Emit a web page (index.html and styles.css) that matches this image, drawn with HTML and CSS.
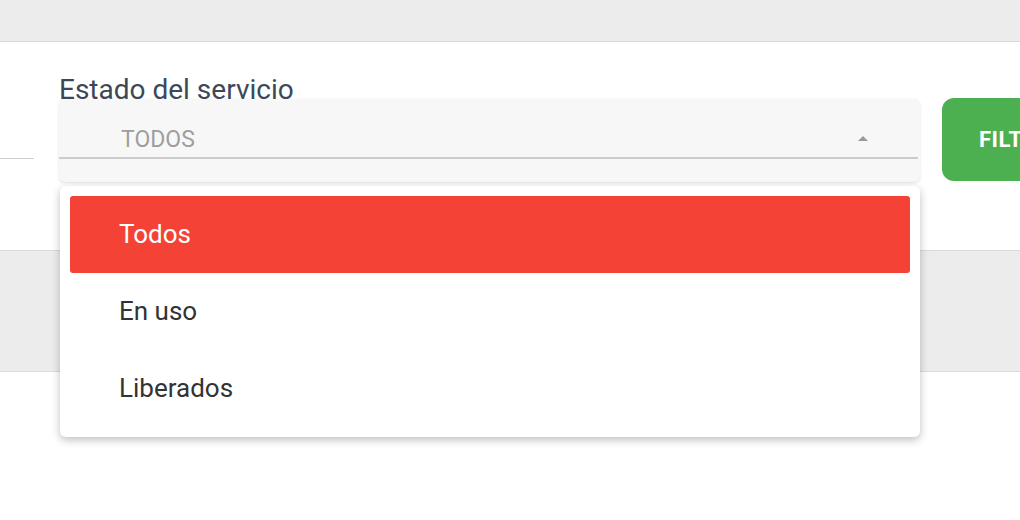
FILE: index.html
```html
<!DOCTYPE html>
<html lang="es">
<head>
  <meta charset="UTF-8" />
  <meta name="viewport" content="width=device-width, initial-scale=1.0"/>
  <title>Filtro de servicios</title>
  <link rel="stylesheet" href="styles.css">
</head>
<body>
  <div class="topbar"></div>

  <div class="filters">
    <div class="field-prev"></div>

    <div class="field">
      <label class="field-label">Estado del servicio</label>
      <div class="select">
        <div class="select-value">
          <span>TODOS</span>
          <span class="caret"></span>
        </div>
      </div>

      <ul class="menu">
        <li class="menu-item active">Todos</li>
        <li class="menu-item">En uso</li>
        <li class="menu-item">Liberados</li>
      </ul>
    </div>

    <button class="btn-filter">FILTRAR</button>
  </div>

  <div class="band"></div>
</body>
</html>
```

FILE: styles.css
```css
* {
  box-sizing: border-box;
  margin: 0;
  padding: 0;
}

body {
  font-family: Roboto, 'Liberation Sans', sans-serif;
  background: #fff;
  width: 1020px;
  height: 520px;
  overflow: hidden;
}

.topbar {
  height: 42px;
  background: #ececec;
  border-bottom: 1px solid #dadada;
}

.filters {
  display: flex;
  align-items: flex-start;
  height: 208px;
  padding-top: 34px;
}

.field-prev {
  width: 34px;
  height: 83px;
  border-bottom: 1px solid #cfcfcf;
  flex-shrink: 0;
}

.field {
  position: relative;
  margin-left: 25px;
  width: 861px;
  flex-shrink: 0;
}

.field-label {
  display: block;
  font-size: 28px;
  line-height: 27px;
  margin-bottom: -4px;
  color: #3c4858;
}

.select {
  position: relative;
  height: 83px;
  background: #f7f7f7;
  border-radius: 6px;
  box-shadow: 0 1px 3px rgba(0, 0, 0, 0.12);
}

.select-value {
  display: flex;
  align-items: center;
  justify-content: space-between;
  height: 60px;
  margin-right: 2px;
  padding: 22px 50px 0 62px;
  border-bottom: 2px solid #cccccc;
  font-size: 23px;
  color: #9e9e9e;
}

.caret {
  width: 0;
  height: 0;
  border-left: 5px solid transparent;
  border-right: 5px solid transparent;
  border-bottom: 5px solid #999;
  margin-top: -2px;
}

.menu {
  position: absolute;
  top: 110px;
  left: 1px;
  width: 860px;
  padding: 10px;
  list-style: none;
  background: #fff;
  border-radius: 6px;
  box-shadow: 0 3px 8px rgba(0, 0, 0, 0.25);
  z-index: 2;
}

.menu-item {
  height: 77px;
  line-height: 76px;
  padding-left: 49px;
  font-size: 26px;
  color: #333;
  border-radius: 3px;
}

.menu-item.active {
  background: #f44336;
  color: #fff;
}

.btn-filter {
  margin-left: 22px;
  margin-top: 22px;
  height: 83px;
  width: 160px;
  flex-shrink: 0;
  border: none;
  border-radius: 12px;
  background: #4caf50;
  color: #fff;
  font-family: Roboto, 'Liberation Sans', sans-serif;
  font-size: 22px;
  font-weight: bold;
  letter-spacing: 0.5px;
  text-align: left;
  padding-left: 37px;
}

.band {
  height: 122px;
  background: #ececec;
  border-top: 1px solid #dadada;
  border-bottom: 1px solid #dadada;
}
```
